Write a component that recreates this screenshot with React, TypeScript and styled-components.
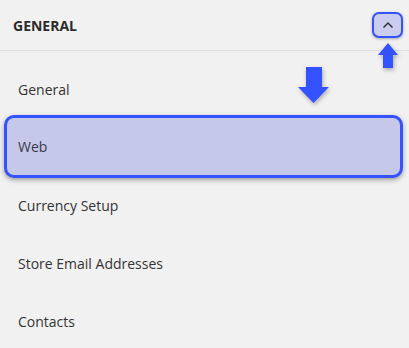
import React from 'react';
import styled, { createGlobalStyle } from 'styled-components';

const GlobalStyle = createGlobalStyle`
  html, body {
    margin: 0;
    padding: 0;
    background: #f1f1f1;
    font-family: "Open Sans", "Liberation Sans", sans-serif;
  }
`;

const Panel = styled.div`
  position: relative;
  width: 409px;
  height: 348px;
  overflow: hidden;
  background: #f1f1f1;
`;

const Header = styled.div`
  display: flex;
  justify-content: space-between;
  align-items: center;
  height: 51px;
  padding: 0 6px 0 13px;
  border-bottom: 1px solid #dedede;
  box-sizing: border-box;
`;

const Title = styled.h2`
  margin: 0;
  font-size: 14px;
  font-weight: 700;
  color: #2b2b2b;
`;

const ToggleButton = styled.button`
  display: flex;
  align-items: center;
  justify-content: center;
  width: 31px;
  height: 26px;
  margin-top: -1px;
  padding: 0;
  border: 2px solid #3452ff;
  border-radius: 7px;
  background: #cbcdf0;
  box-shadow: 0 1px 3px rgba(0, 0, 0, 0.3);
  color: #333;
  cursor: pointer;
`;

const List = styled.ul`
  list-style: none;
  margin: 0;
  padding: 9px 0 0;
`;

const Item = styled.li<{ $active?: boolean }>`
  display: flex;
  align-items: center;
  height: ${(p) => (p.$active ? '63px' : '58px')};
  margin: ${(p) => (p.$active ? '-3px 6px -2px 4px' : '0')};
  padding-left: ${(p) => (p.$active ? '11px' : '18px')};
  box-sizing: border-box;
  font-size: 14px;
  color: ${(p) => (p.$active ? '#3a3a4a' : '#333')};
  background: ${(p) => (p.$active ? '#c5c8e9' : 'transparent')};
  border: ${(p) => (p.$active ? '3px solid #3452ff' : 'none')};
  border-radius: ${(p) => (p.$active ? '10px' : '0')};
  box-shadow: ${(p) => (p.$active ? '0 2px 5px rgba(0, 0, 0, 0.35)' : 'none')};
`;

const Arrow = styled.svg<{ $x: number; $y: number }>`
  position: absolute;
  left: ${(p) => p.$x}px;
  top: ${(p) => p.$y}px;
  filter: drop-shadow(1px 2px 2px rgba(0, 0, 0, 0.3));
`;

const items = ['General', 'Web', 'Currency Setup', 'Store Email Addresses', 'Contacts'];

const App = () => {
  return (
    <>
      <GlobalStyle />
      <Panel>
        <Header>
          <Title>GENERAL</Title>
          <ToggleButton aria-label="Collapse">
            <svg width="12" height="8" viewBox="0 0 12 8" fill="none">
              <path d="M1.5 6.5 L6 2 L10.5 6.5" stroke="#333" strokeWidth="1.5" />
            </svg>
          </ToggleButton>
        </Header>
        <List>
          {items.map((label) => (
            <Item key={label} $active={label === 'Web'}>
              {label}
            </Item>
          ))}
        </List>

        <Arrow $x={377} $y={43} width="22" height="25" viewBox="0 0 22 25">
          <path d="M11 0 L21 12 L16 12 L16 25 L6 25 L6 12 L1 12 Z" fill="#3452ff" />
        </Arrow>

        <Arrow $x={298} $y={67} width="31" height="36" viewBox="0 0 31 36">
          <path d="M8 0 L24 0 L24 20 L31 20 L15.5 36 L0 20 L8 20 Z" fill="#3452ff" />
        </Arrow>
      </Panel>
    </>
  );
};

export default App;
